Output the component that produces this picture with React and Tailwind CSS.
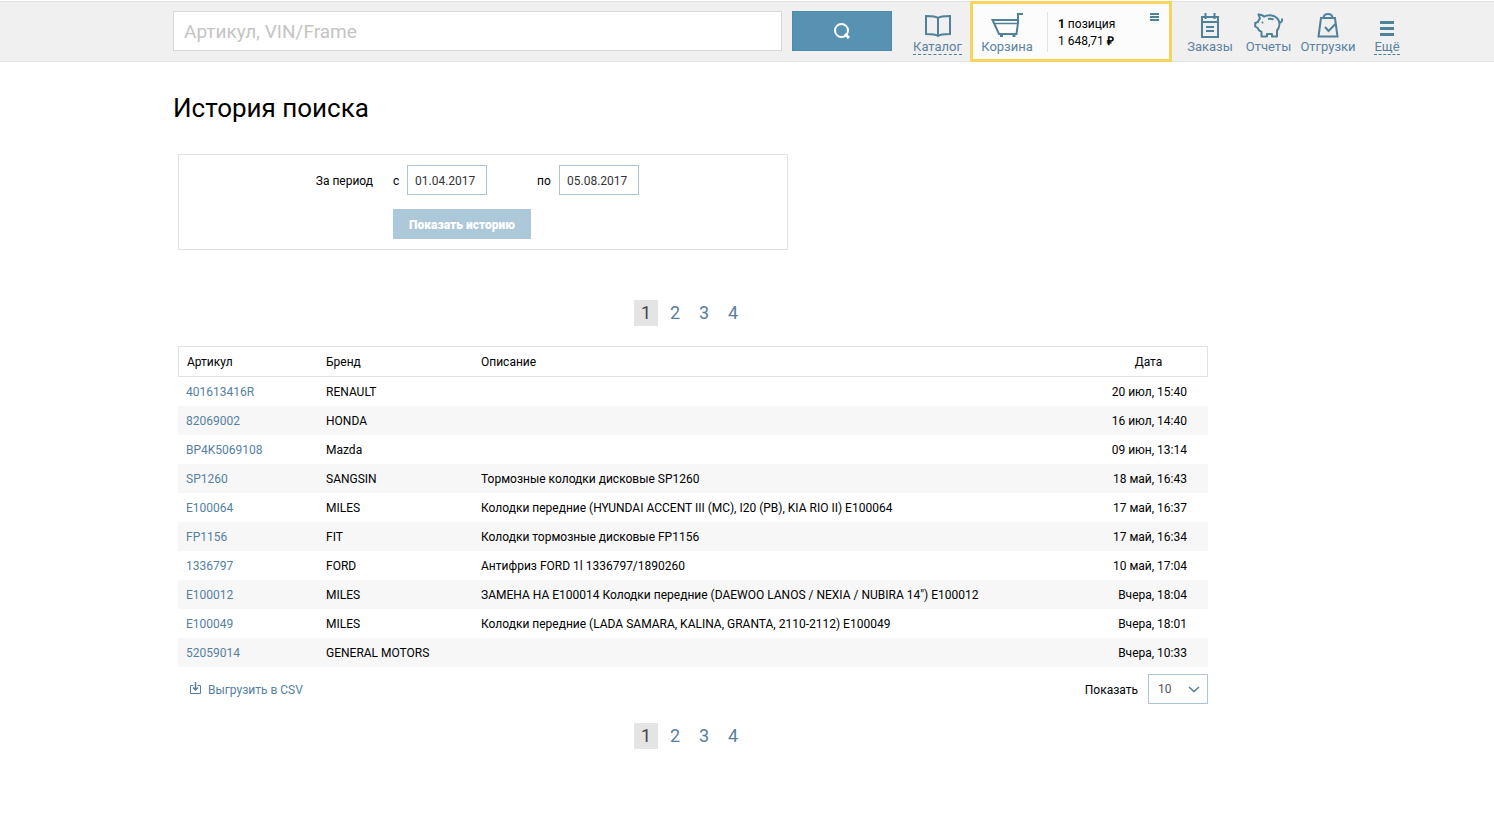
import React, { useState } from 'react';

const rows = [
  { article: '401613416R', brand: 'RENAULT', description: '', date: '20 июл, 15:40' },
  { article: '82069002', brand: 'HONDA', description: '', date: '16 июл, 14:40' },
  { article: 'BP4K5069108', brand: 'Mazda', description: '', date: '09 июн, 13:14' },
  { article: 'SP1260', brand: 'SANGSIN', description: 'Тормозные колодки дисковые SP1260', date: '18 май, 16:43' },
  { article: 'E100064', brand: 'MILES', description: 'Колодки передние (HYUNDAI ACCENT III (MC), I20 (PB), KIA RIO II) E100064', date: '17 май, 16:37' },
  { article: 'FP1156', brand: 'FIT', description: 'Колодки тормозные дисковые FP1156', date: '17 май, 16:34' },
  { article: '1336797', brand: 'FORD', description: 'Антифриз FORD 1l 1336797/1890260', date: '10 май, 17:04' },
  { article: 'E100012', brand: 'MILES', description: 'ЗАМЕНА НА E100014 Колодки передние (DAEWOO LANOS / NEXIA / NUBIRA 14") E100012', date: 'Вчера, 18:04' },
  { article: 'E100049', brand: 'MILES', description: 'Колодки передние (LADA SAMARA, KALINA, GRANTA, 2110-2112) E100049', date: 'Вчера, 18:01' },
  { article: '52059014', brand: 'GENERAL MOTORS', description: '', date: 'Вчера, 10:33' },
];

const BookIcon = () => (
  <svg width="28" height="24" viewBox="0 0 28 24" fill="none" stroke="currentColor" strokeWidth="2">
    <path d="M14 4C12 2.300 9 2 2 2v18c7 0 10 .3 12 2 2-1.700 5-2 12-2V2c-7 0-10 .3-12 2zM14 4v18" />
  </svg>
);

const CartIcon = () => (
  <svg width="34" height="26" viewBox="0 0 34 26" fill="none" stroke="currentColor" strokeWidth="2">
    <path d="M33 2h-5v9l-1.500 11H9L2.500 8H28" />
    <path d="M4 11.500h24" strokeWidth="1.500" />
    <path d="M11.500 22v3M24 22v3" strokeWidth="3" />
  </svg>
);

const OrdersIcon = () => (
  <svg width="20" height="25" viewBox="0 0 20 25" fill="none" stroke="currentColor" strokeWidth="2">
    <path d="M2 4h16v20H2zM2 9h16M6 14h8M6 18h8" />
    <path d="M5.500 0v6M14.500 0v6" />
  </svg>
);

const PigIcon = () => (
  <svg width="29" height="25" viewBox="0 0 29 25" fill="none" stroke="currentColor" strokeWidth="2" strokeLinejoin="round">
    <path d="M4.500 1.500c2.500 0 4.500.8 5.500 2.200C14 1.500 21 1.500 24.500 7c1.500 3 1 7.500-1.500 10.500V23.500h-5V21h-5v2.500H7.500V19C5.500 18 4 16.500 3.500 14.800L1.200 13.500V10l2.800-1c.3-1.500 1-2.500 2-3.500z" />
    <path d="M14 6c2-.5 4-.3 5.500.7M25 10c2.500-.5 3.500-2 3-4.500" />
    <circle cx="8.500" cy="9.500" r="1" fill="currentColor" stroke="none" />
  </svg>
);

const BagIcon = () => (
  <svg width="22" height="26" viewBox="0 0 22 26" fill="none" stroke="currentColor" strokeWidth="2">
    <path d="M4 6h14l2.500 18.500h-19zM6.500 6c.3-5.500 8.700-5.500 9 0M8 15l3.500 4 7-7" />
  </svg>
);

const MenuIcon = () => (
  <svg width="14" height="17" viewBox="0 0 14 17" fill="currentColor">
    <path d="M0 0h14v3H0zM0 6h14v3H0zM0 12h14v3H0z" />
  </svg>
);

const navItems = [
  { title: 'Заказы', icon: <OrdersIcon />, width: 'w-[60px]' },
  { title: 'Отчеты', icon: <PigIcon />, width: 'w-[57px]' },
  { title: 'Отгрузки', icon: <BagIcon />, width: 'w-[62px]' },
  { title: 'Ещё', icon: <MenuIcon />, width: 'w-[56px]', dashed: true },
];

const NavLink = ({ title, icon, width, dashed }) => (
  <a href="#" className={`flex shrink-0 flex-col items-center text-[13px] leading-[14px] text-[#5a82a0] ${width}`}>
    <span className="flex h-[29px] items-end text-[#4f8199]">{icon}</span>
    <span className={dashed ? 'mt-[2px] border-b border-dashed border-[#4f8199]' : 'mt-[2px]'}>{title}</span>
  </a>
);

const Header = () => (
  <header className="flex h-[61px] border-y border-[#e2e2e2] bg-[#f0f0f0] pr-[79px] pl-[173px]">
    <form className="mt-[9px] flex flex-1 gap-[10px]" onSubmit={(e) => e.preventDefault()}>
      <input
        type="text"
        aria-label="Артикул, VIN/Frame"
        placeholder="Артикул, VIN/Frame"
        className="h-10 min-w-0 flex-1 border border-[#d8d8d8] bg-white px-[10px] text-[19px] outline-none placeholder:text-[#c4c4c4]"
      />
      <button type="submit" aria-label="Найти" className="flex h-10 w-[100px] items-center justify-center border border-[#4e8aaa] bg-[#5792b2] text-white">
        <svg width="18" height="18" viewBox="0 0 18 18" fill="none" stroke="currentColor" strokeWidth="2">
          <circle cx="8.500" cy="8.500" r="6.500" />
          <path d="M12 12l4 4" strokeWidth="3" />
        </svg>
      </button>
    </form>
    <nav className="ml-[13px] flex pt-[7px]">
      <NavLink title="Каталог" icon={<BookIcon />} width="w-[65px]" dashed />
      <div className="-mt-2 flex h-[61px] w-[202px] shrink-0 border-[3px] border-[#f5d55c] bg-[#fcfcfc] pt-[5px]">
        <NavLink title="Корзина" icon={<CartIcon />} width="w-[68px]" />
        <div className="mt-[3px] ml-[6px] h-10 border-l border-[#e2e2e2] pt-1 pl-[10px] text-[12px] leading-[17px]">
          <div><b>1</b> позиция</div>
          <div>1 648,71 <span className="font-['Liberation_Sans',sans-serif] font-bold">₽</span></div>
        </div>
        <button type="button" aria-label="Состав корзины" className="mt-1 mr-[10px] ml-auto self-start text-[#4f8199]">
          <svg width="9" height="9" viewBox="0 0 9 9" fill="currentColor">
            <path d="M0 0h9v2H0zM0 3h9v2H0zM0 6h9v2H0z" />
          </svg>
        </button>
      </div>
      <div className="ml-2 flex">
        {navItems.map((item) => (
          <NavLink key={item.title} {...item} />
        ))}
      </div>
    </nav>
  </header>
);

const Pagination = ({ page, onChange }) => (
  <div className="flex justify-center gap-[5px] pr-[7px] text-[18px] leading-[26px]">
    {[1, 2, 3, 4].map((n) => (
      <button
        key={n}
        type="button"
        onClick={() => onChange(n)}
        className={n === page ? 'w-6 bg-[#e4e4e4] text-[#444]' : 'w-6 text-[#55809f]'}
      >
        {n}
      </button>
    ))}
  </div>
);

const App = () => {
  const [from, setFrom] = useState('01.04.2017');
  const [to, setTo] = useState('05.08.2017');
  const [page, setPage] = useState(1);
  const [perPage, setPerPage] = useState('10');

  return (
    <div className="bg-white pt-px font-[Roboto,'Liberation_Sans',sans-serif] text-[12px] text-black">
      <Header />
      <main className="pr-[173px] pb-[75px] pl-[173px]">
        <h1 className="pt-[30px] text-[26px] leading-8">История поиска</h1>

        <div className="ml-[5px] max-w-[1030px]">
          <form
            className="mt-[30px] h-24 max-w-[610px] border border-[#e2e2e2] pt-[10px]"
            onSubmit={(e) => e.preventDefault()}
          >
            <div className="flex items-center">
              <span className="w-[194px] pt-px text-right">За период</span>
              <label htmlFor="from" className="ml-5 w-[14px] pt-px">с</label>
              <input
                id="from"
                value={from}
                onChange={(e) => setFrom(e.target.value)}
                className="h-[30px] w-20 border border-[#adc6d3] px-[7px] pt-px text-[#333]"
              />
              <label htmlFor="to" className="ml-[50px] w-[22px] pt-px">по</label>
              <input
                id="to"
                value={to}
                onChange={(e) => setTo(e.target.value)}
                className="h-[30px] w-20 border border-[#adc6d3] px-[7px] pt-px text-[#333]"
              />
            </div>
            <button type="submit" className="mt-[14px] ml-[214px] h-[30px] w-[138px] bg-[#adc8d9] pt-px font-black text-white">
              Показать историю
            </button>
          </form>

          <div className="mt-[50px]">
            <Pagination page={page} onChange={setPage} />
          </div>

          <table className="mt-5 w-full table-fixed border-separate border-spacing-0 leading-4">
            <thead>
              <tr className="h-[31px] text-left">
                <th className="w-[140px] border-y border-l border-[#e2e2e2] pl-2 font-normal">Артикул</th>
                <th className="w-[155px] border-y border-[#e2e2e2] pl-2 font-normal">Бренд</th>
                <th className="border-y border-[#e2e2e2] pl-2 font-normal">Описание</th>
                <th className="w-[118px] border-y border-r border-[#e2e2e2] text-center font-normal">Дата</th>
              </tr>
            </thead>
            <tbody>
              {rows.map((row) => (
                <tr key={row.article} className="h-[29px] even:bg-[#f7f7f7]">
                  <td className="pl-2">
                    <a href="#" className="text-[#55809f]">{row.article}</a>
                  </td>
                  <td className="pl-2">{row.brand}</td>
                  <td className="pl-2">{row.description}</td>
                  <td className="pr-[21px] text-right">{row.date}</td>
                </tr>
              ))}
            </tbody>
          </table>

          <div className="mt-[7px] flex h-[30px] items-center justify-between">
            <a href="#" className="ml-3 flex items-center gap-[7px] pt-px text-[#55809f]">
              <svg className="mb-[3px]" width="11" height="12" viewBox="0 0 11 12" fill="none" stroke="currentColor">
                <path d="M3.500 3.500h-3v8h10v-8h-3" />
                <path d="M5.500 0v8M3 5.500l2.500 2.500L8 5.500" strokeWidth="1.500" />
              </svg>
              Выгрузить в CSV
            </a>
            <div className="flex items-center">
              <label htmlFor="per-page" className="mr-[10px] pt-px">Показать</label>
              <div className="relative">
                <select
                  id="per-page"
                  value={perPage}
                  onChange={(e) => setPerPage(e.target.value)}
                  className="block h-[30px] w-[60px] appearance-none border border-[#adc6d3] bg-white pl-[9px] text-[#555]"
                >
                  <option>10</option>
                  <option>20</option>
                  <option>50</option>
                </select>
                <svg className="pointer-events-none absolute top-3 right-2" width="12" height="7" viewBox="0 0 12 7" fill="none" stroke="#4f8199" strokeWidth="1.500">
                  <path d="M1 1l5 4.500L11 1" />
                </svg>
              </div>
            </div>
          </div>

          <div className="mt-[19px]">
            <Pagination page={page} onChange={setPage} />
          </div>
        </div>
      </main>
    </div>
  );
};

export default App;
